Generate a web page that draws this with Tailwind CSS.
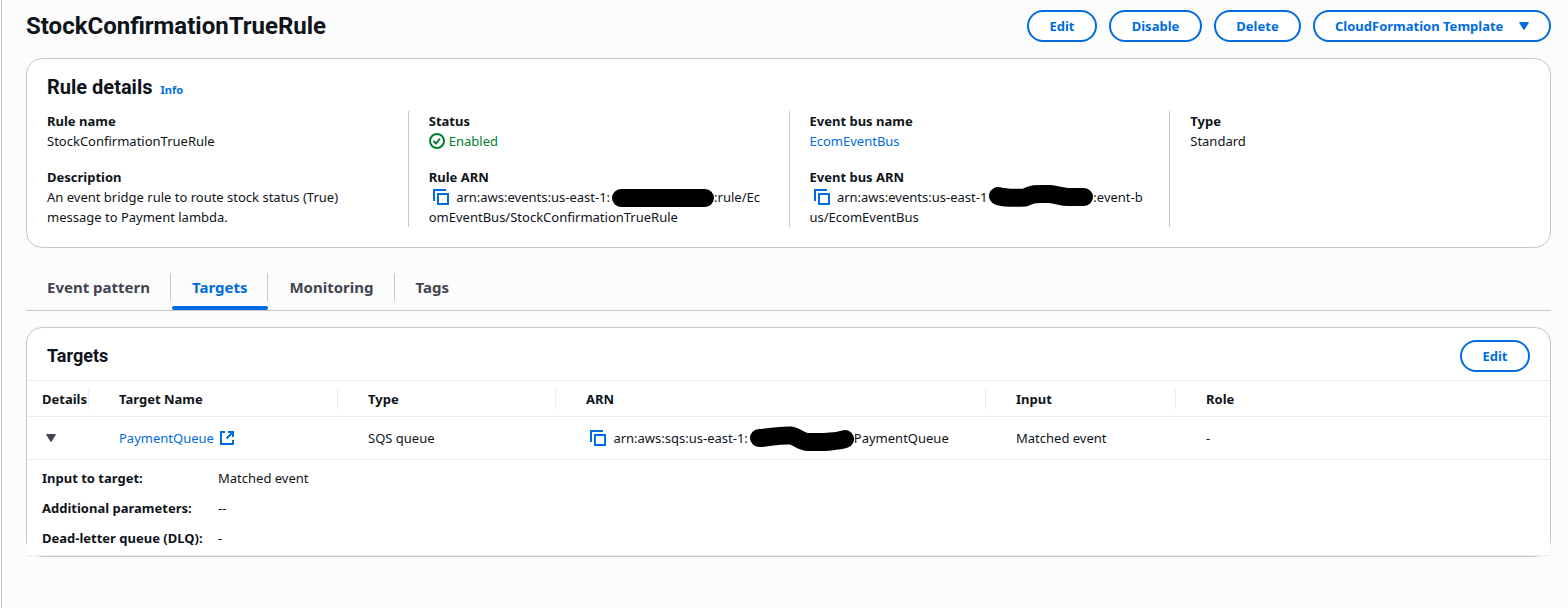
<!DOCTYPE html>
<html lang="en">
<head>
<meta charset="utf-8">
<title>StockConfirmationTrueRule</title>
<script src="https://cdn.jsdelivr.net/npm/@tailwindcss/browser@4"></script>
</head>
<body class="bg-[#fcfcfd] font-['Noto_Sans',sans-serif] text-[13px] leading-5 text-[#0f141a]">
<svg class="hidden" aria-hidden="true">
  <symbol id="copy" viewBox="0 0 16 16"><path d="M1 12V1h12M5 5h10v10H5z" fill="none" stroke="currentColor" stroke-width="2"/></symbol>
  <symbol id="caret" viewBox="0 0 10 8"><path d="M.8 0h8.4q1.1 0 .5.9L5.6 7.6q-.6.8-1.2 0L.3.9Q-.2 0 .8 0z" fill="currentColor"/></symbol>
</svg>
<main class="ml-px min-h-screen border-l border-[#c6c6cd] pt-2.5 pr-[17px] pl-6">
  <header class="flex items-center justify-between">
    <h1 class="font-[Roboto,sans-serif] text-2xl leading-8 font-bold">StockConfirmationTrueRule</h1>
    <div class="flex gap-3 font-bold text-[#006ce0]">
      <button class="h-8 min-w-[70px] rounded-full border-2 border-[#006ce0] bg-white px-5">Edit</button>
      <button class="h-8 min-w-[93px] rounded-full border-2 border-[#006ce0] bg-white px-5">Disable</button>
      <button class="h-8 min-w-[87px] rounded-full border-2 border-[#006ce0] bg-white px-5">Delete</button>
      <button class="flex h-8 min-w-[238px] items-center justify-between rounded-full border-2 border-[#006ce0] bg-white px-5">CloudFormation Template <svg class="h-2 w-2.5"><use href="#caret"/></svg></button>
    </div>
  </header>

  <section class="mt-4 rounded-2xl border border-[#c6c6cd] bg-white pt-4 pb-5">
    <div class="flex items-baseline gap-2 px-5">
      <h2 class="font-[Roboto,sans-serif] text-xl leading-6 font-bold">Rule details</h2>
      <a href="#" class="text-[11px] leading-4 font-bold text-[#006ce0]">Info</a>
    </div>
    <div class="mt-3 grid grid-cols-4">
      <dl class="px-5">
        <dt class="font-bold">Rule name</dt>
        <dd>StockConfirmationTrueRule</dd>
        <dt class="mt-4 font-bold">Description</dt>
        <dd>An event bridge rule to route stock status (True) message to Payment lambda.</dd>
      </dl>
      <dl class="border-l border-[#c6c6cd] px-5">
        <dt class="font-bold">Status</dt>
        <dd class="flex items-center gap-1 text-[#00802f]"><svg class="size-4" viewBox="0 0 16 16" fill="none" stroke="currentColor" stroke-width="2"><circle cx="8" cy="8" r="7"/><path d="m4.500 8 2.500 2.500L11 5.500"/></svg>Enabled</dd>
        <dt class="mt-4 font-bold">Rule ARN</dt>
        <dd><button class="mx-1 mt-0.5 h-4 align-top text-[#006ce0]" aria-label="Copy rule ARN"><svg class="size-4"><use href="#copy"/></svg></button> arn:aws:events:us-east-1:<svg class="inline h-5 w-[104px] align-top" viewBox="0 0 104 20"><rect x="2" y="2" width="102" height="18" rx="9"/></svg>:rule/Ec<wbr>omEventBus/StockConfirmationTrueRule</dd>
      </dl>
      <dl class="border-l border-[#c6c6cd] px-5">
        <dt class="font-bold">Event bus name</dt>
        <dd><a href="#" class="text-[#006ce0]">EcomEventBus</a></dd>
        <dt class="mt-4 font-bold">Event bus ARN</dt>
        <dd><button class="mx-1 mt-0.5 h-4 align-top text-[#006ce0]" aria-label="Copy event bus ARN"><svg class="size-4"><use href="#copy"/></svg></button> arn:aws:events:us-east-1<svg class="inline h-5 w-[106px] overflow-visible align-top" viewBox="0 0 106 20"><path d="M11 9C18 11 30 11 38 10.500C47 6 51 7 63 7C71 8 75 10 81 10H97" fill="none" stroke="#000" stroke-width="18" stroke-linecap="round" stroke-linejoin="round"/></svg>:event-b<wbr>us/EcomEventBus</dd>
      </dl>
      <dl class="border-l border-[#c6c6cd] px-5">
        <dt class="font-bold">Type</dt>
        <dd>Standard</dd>
      </dl>
    </div>
  </section>

  <div role="tablist" class="mt-4 flex border-b border-[#c6c6cd] text-[15px] font-bold text-[#424650]">
    <button role="tab" class="relative h-[46px] px-[21px] after:absolute after:top-[9px] after:right-0 after:h-7 after:w-px after:bg-[#c6c6cd]">Event pattern</button>
    <button role="tab" aria-selected="true" class="relative h-[46px] px-[21px] text-[#006ce0] after:absolute after:top-[9px] after:right-0 after:h-7 after:w-px after:bg-[#c6c6cd]">Targets<span class="absolute right-0 bottom-0 left-px h-1 rounded-xs bg-[#006ce0]"></span></button>
    <button role="tab" class="relative h-[46px] px-[21px] after:absolute after:top-[9px] after:right-0 after:h-7 after:w-px after:bg-[#c6c6cd]">Monitoring</button>
    <button role="tab" class="h-[46px] px-[21px]">Tags</button>
  </div>

  <section class="mt-4 rounded-2xl border border-[#c6c6cd] bg-white">
    <div class="flex items-center justify-between px-5 pt-3 pb-2">
      <h2 class="font-[Roboto,sans-serif] text-lg font-bold">Targets</h2>
      <button class="h-8 min-w-[70px] rounded-full border-2 border-[#006ce0] bg-white px-5 font-bold text-[#006ce0]">Edit</button>
    </div>
    <table class="w-full table-fixed border-collapse bg-white text-left">
      <thead>
        <tr class="border-y border-[#ebebf0]">
          <th class="w-[62px] pt-2 pb-[7px]"><div class="border-r border-[#ebebf0] pl-[15px]">Details</div></th>
          <th class="w-[249px] pt-2 pb-[7px]"><div class="border-r border-[#ebebf0] pl-[30px]">Target Name</div></th>
          <th class="w-[218px] pt-2 pb-[7px]"><div class="border-r border-[#ebebf0] pl-[30px]">Type</div></th>
          <th class="w-[430px] pt-2 pb-[7px]"><div class="border-r border-[#ebebf0] pl-[30px]">ARN</div></th>
          <th class="w-[190px] pt-2 pb-[7px]"><div class="border-r border-[#ebebf0] pl-[30px]">Input</div></th>
          <th class="pt-2 pb-[7px] pl-[30px]">Role</th>
        </tr>
      </thead>
      <tbody>
        <tr class="h-[43px] border-b border-[#ebebf0]">
          <td class="pl-[19px]"><button class="block text-[#424650]" aria-label="Toggle details" aria-expanded="true"><svg class="h-2 w-2.5"><use href="#caret"/></svg></button></td>
          <td class="pl-[30px]"><a href="#" class="flex items-center gap-1.5 text-[#006ce0]">PaymentQueue <svg class="size-3.5" viewBox="0 0 14 14" fill="none" stroke="currentColor" stroke-width="2"><path d="M5 1H1v12h12V9M8 1h5v5M13 1 6.500 7.500"/></svg></a></td>
          <td class="pl-[30px]">SQS queue</td>
          <td class="pl-[30px]"><button class="mx-1 mt-0.5 h-4 align-top text-[#006ce0]" aria-label="Copy target ARN"><svg class="size-4"><use href="#copy"/></svg></button> arn:aws:sqs:us-east-1:<svg class="inline h-5 w-[106px] overflow-visible align-top" viewBox="0 0 106 20"><path d="M11 10C20 10 28 7 43 7.500C50 9 53 14 60 14H77C87 13 91 13 97 11" fill="none" stroke="#000" stroke-width="18" stroke-linecap="round" stroke-linejoin="round"/></svg>PaymentQueue</td>
          <td class="pl-[30px]">Matched event</td>
          <td class="pl-[30px]">-</td>
        </tr>
        <tr class="border-b border-[#ebebf0]">
          <td colspan="6" class="pt-2 pb-[7px] pl-[15px]">
            <dl class="grid grid-cols-[176px_1fr] gap-y-2.5">
              <dt class="font-bold">Input to target:</dt><dd>Matched event</dd>
              <dt class="font-bold">Additional parameters:</dt><dd>--</dd>
              <dt class="font-bold">Dead-letter queue (DLQ):</dt><dd>-</dd>
            </dl>
          </td>
        </tr>
      </tbody>
    </table>
  </section>
</main>
</body>
</html>
